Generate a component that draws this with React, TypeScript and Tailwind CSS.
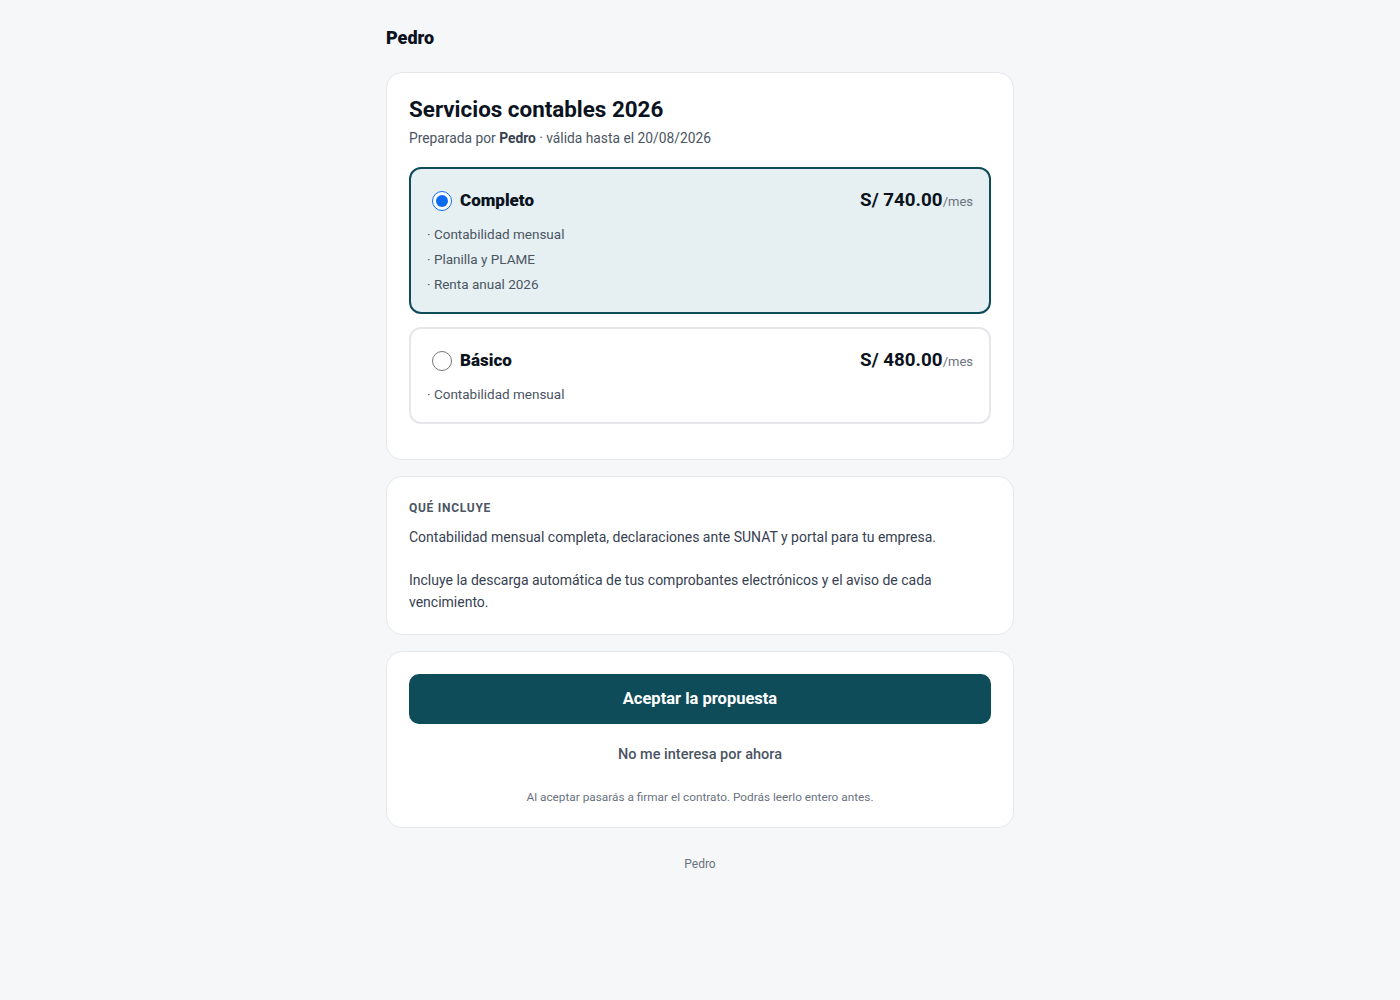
import React, { useState } from 'react';

interface Plan {
  id: string;
  name: string;
  price: string;
  features: string[];
}

const plans: Plan[] = [
  {
    id: 'completo',
    name: 'Completo',
    price: 'S/ 740.00',
    features: ['Contabilidad mensual', 'Planilla y PLAME', 'Renta anual 2026'],
  },
  {
    id: 'basico',
    name: 'Básico',
    price: 'S/ 480.00',
    features: ['Contabilidad mensual'],
  },
];

export default function App() {
  const [selected, setSelected] = useState('completo');

  return (
    <div
      className="min-h-screen bg-[#f6f7f9] text-[#111827]"
      style={{ fontFamily: 'Roboto, "Open Sans", sans-serif' }}
    >
      <div className="mx-auto w-[628px] pt-[27px] pb-16">
        <div className="text-[18px] font-black leading-[22px] text-[#0b1220]">Pedro</div>

        {/* Proposal card */}
        <div className="mt-[23px] rounded-2xl border border-[#e5e7eb] bg-white px-[22px] pt-[21px] pb-[35px]">
          <h1 className="text-[22.4px] font-bold leading-[30px] text-[#0b1220]">Servicios contables 2026</h1>
          <p className="mt-[5px] text-[13.8px] leading-[18px] text-[#4b5563]">
            Preparada por <span className="font-bold text-[#374151]">Pedro</span> · válida hasta el 20/08/2026
          </p>

          <div className="mt-[20px] flex flex-col gap-[13px]">
            {plans.map((plan) => {
              const active = selected === plan.id;
              return (
                <label
                  key={plan.id}
                  className={`block cursor-pointer rounded-xl border-2 px-[16px] pt-[18px] pb-[15px] ${
                    active ? 'border-[#0f4c5a] bg-[#e6f0f2]' : 'border-[#e5e7eb] bg-white'
                  }`}
                >
                  <div className="flex h-[27px] items-center justify-between">
                    <div className="flex items-center gap-[5px]">
                      <input
                        type="radio"
                        name="plan"
                        checked={active}
                        onChange={() => setSelected(plan.id)}
                        className="m-0 ml-[5px] mr-[3px] h-[20px] w-[20px] accent-[#0b6cf0]"
                      />
                      <span className="text-[17px] font-black text-[#0b1220]">{plan.name}</span>
                    </div>
                    <div className="flex items-baseline">
                      <span className="text-[18.8px] font-bold text-[#0b1220]">{plan.price}</span>
                      <span className="text-[13px] text-[#6b7280]">/mes</span>
                    </div>
                  </div>
                  <ul className="mt-[8px] flex flex-col">
                    {plan.features.map((f) => (
                      <li key={f} className="text-[13.5px] leading-[25px] text-[#4b5563]">
                        · {f}
                      </li>
                    ))}
                  </ul>
                </label>
              );
            })}
          </div>
        </div>

        {/* What's included */}
        <div className="mt-[16px] rounded-2xl border border-[#e5e7eb] bg-white px-[22px] pt-[23px] pb-[21px]">
          <div className="text-[12px] font-bold uppercase leading-[16px] tracking-[0.06em] text-[#4b5563]">
            Qué incluye
          </div>
          <div className="mt-[10px] text-[14px] leading-[22px] text-[#374151]">
            <p>Contabilidad mensual completa, declaraciones ante SUNAT y portal para tu empresa.</p>
            <p className="mt-[21px]">
              Incluye la descarga automática de tus comprobantes electrónicos y el aviso de cada vencimiento.
            </p>
          </div>
        </div>

        {/* Actions */}
        <div className="mt-[16px] rounded-2xl border border-[#e5e7eb] bg-white px-[22px] pt-[22px] pb-[22px]">
          <button className="flex h-[50px] w-full items-center justify-center rounded-[10px] bg-[#0f4c5a] text-[16.5px] font-bold text-white">
            Aceptar la propuesta
          </button>
          <button className="mt-[21px] block w-full text-center text-[14.5px] font-medium leading-[20px] text-[#4b5563]">
            No me interesa por ahora
          </button>
          <p className="mt-[24px] text-center text-[11.8px] leading-[16px] text-[#6b7280]">
            Al aceptar pasarás a firmar el contrato. Podrás leerlo entero antes.
          </p>
        </div>

        <div className="mt-[28px] text-center text-[12px] leading-[16px] text-[#6b7280]">Pedro</div>
      </div>
    </div>
  );
}
